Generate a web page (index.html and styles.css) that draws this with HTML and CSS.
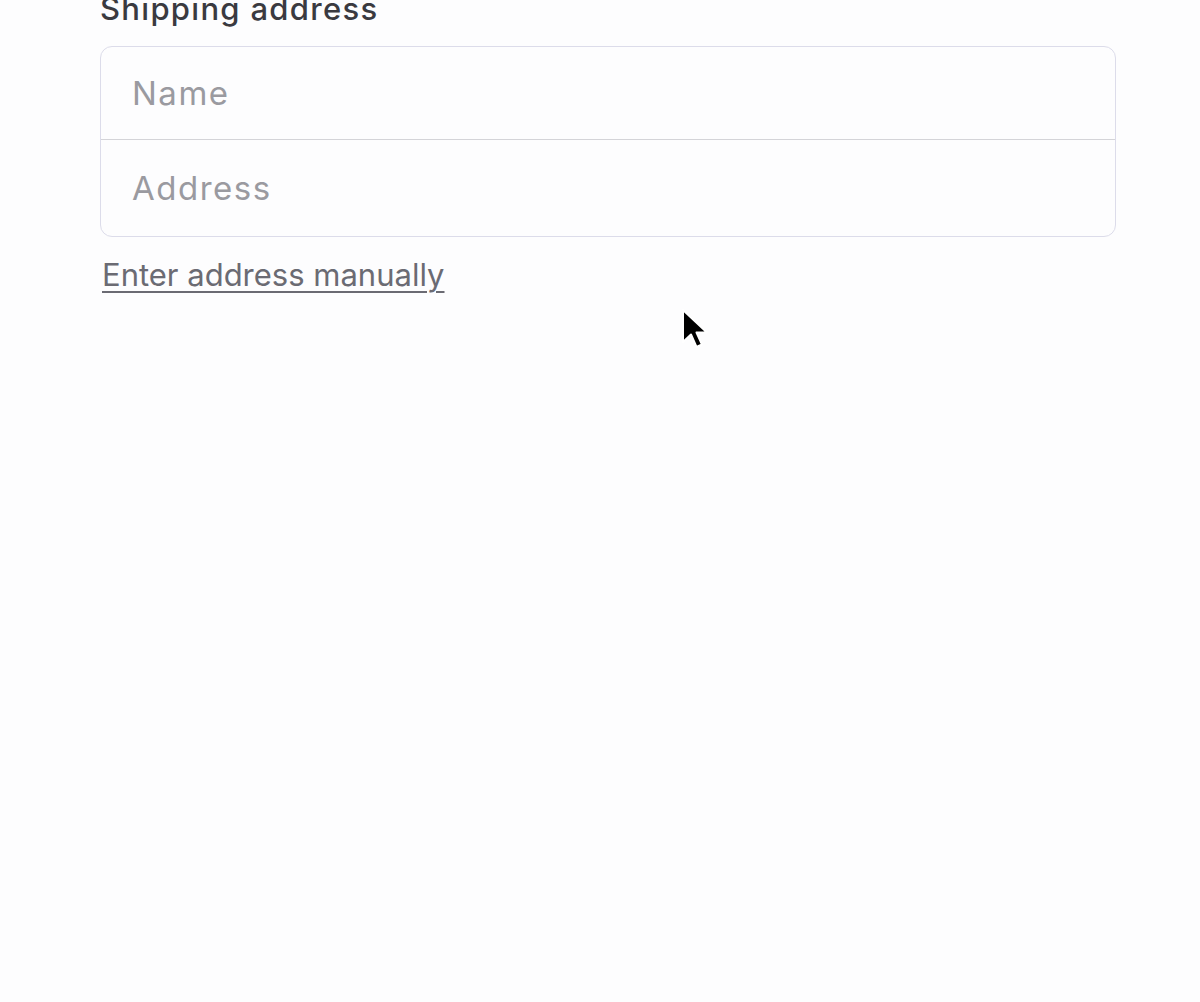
FILE: index.html
```html
<!DOCTYPE html>
<html>
<head>
<meta charset="utf-8">
<link rel="stylesheet" href="styles.css">
</head>
<body>
<div class="form">
  <div class="label">Shipping address</div>
  <div class="box">
    <div class="row row-name">Name</div>
    <div class="row row-address">Address</div>
  </div>
  <a class="link">Enter address manually</a>
</div>
<svg class="cursor" width="30" height="46" viewBox="0 0 30 46">
  <path d="M2 2 L2 34 L10 26.5 L15.5 39 L21 36.5 L15.5 24.5 L26 24.5 Z" fill="#000" stroke="#fff" stroke-width="2" stroke-linejoin="round"/>
</svg>
</body>
</html>
```
FILE: styles.css
```css
html, body {
  margin: 0;
  padding: 0;
  background: #fdfdfe;
  font-family: Inter, "Noto Sans", sans-serif;
}
body {
  position: relative;
  width: 1200px;
  height: 1002px;
  overflow: hidden;
}
.form {
  padding: 0 84px 0 100px;
  margin-top: -9px;
}
.label {
  font-size: 31px;
  font-weight: 500;
  line-height: 36px;
  letter-spacing: 1.3px;
  color: #3a3a40;
  margin-bottom: 19px;
}
.box {
  border: 1px solid #dcdcea;
  border-radius: 12px;
  background: #fdfdfe;
}
.row {
  display: flex;
  align-items: center;
  padding-left: 31px;
  font-size: 33px;
  letter-spacing: 1.5px;
  color: #9a9aa0;
  box-sizing: border-box;
}
.row-name {
  height: 92px;
}
.row-address {
  border-top: 1px solid #d4d4d8;
  height: 97px;
}
.link {
  display: inline-block;
  margin-top: 19px;
  margin-left: 2px;
  font-size: 31px;
  color: #6b6b73;
  text-decoration: underline;
  text-underline-offset: 5px;
  text-decoration-thickness: 2px;
}
.cursor {
  position: absolute;
  left: 681px;
  top: 308px;
}
```
